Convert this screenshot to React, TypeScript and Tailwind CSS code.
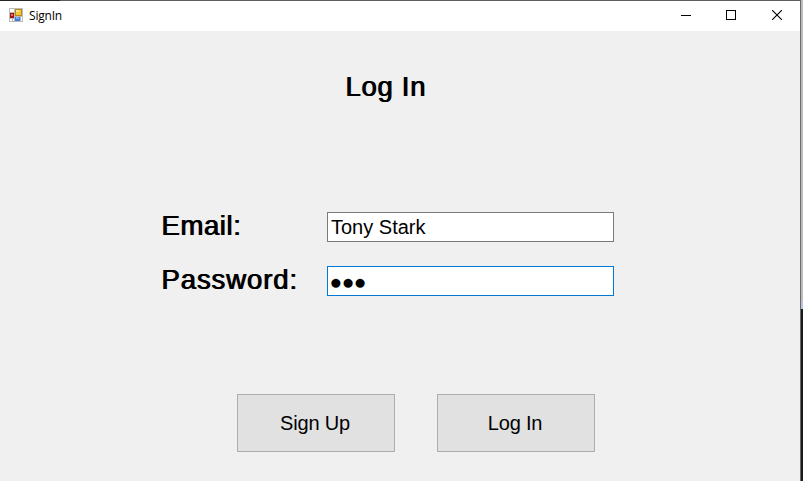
import React from "react";

const labelText =
  "text-[27.5px] leading-[30px] whitespace-nowrap [text-shadow:1px_0_0_#000]";

function FormIcon() {
  return (
    <svg width="14" height="14" viewBox="0 0 14 14" shapeRendering="crispEdges">
      <rect width="14" height="14" fill="#bcbcbc" />
      <rect x="1" y="1" width="4" height="3" fill="#fff" />
      <rect x="6" y="1" width="7" height="7" fill="#b98a10" />
      <rect x="7" y="2" width="5" height="5" fill="#f2c63c" />
      <rect x="7" y="2" width="3" height="2" fill="#fbe38c" />
      <rect x="1" y="5" width="4" height="5" fill="#a31212" />
      <rect x="2" y="6" width="2" height="2" fill="#e8705c" />
      <rect x="1" y="11" width="2" height="2" fill="#fff" />
      <rect x="4" y="11" width="1" height="2" fill="#fff" />
      <rect x="6" y="9" width="5" height="4" fill="#3f7be0" />
      <rect x="7" y="9" width="3" height="2" fill="#84acf2" />
      <rect x="12" y="9" width="1" height="4" fill="#fff" />
    </svg>
  );
}

function TitleBar() {
  return (
    <header className="flex h-[30px] items-center bg-white pl-[9px]">
      <div className="pb-[2px]">
        <FormIcon />
      </div>
      <span className="ml-[6px] font-['Open_Sans',sans-serif] text-[12px] leading-[16px] tracking-[-0.2px]">
        SignIn
      </span>
      <div className="ml-auto flex h-full items-center pr-[18px] pb-[2px]">
        <svg width="10" height="10" className="mr-[35px]" shapeRendering="crispEdges">
          <rect y="5" width="10" height="1" />
        </svg>
        <svg width="10" height="10" className="mr-[36px]" shapeRendering="crispEdges">
          <path fillRule="evenodd" d="M0 0h10v10H0zM1 1v8h8V1z" />
        </svg>
        <svg width="10" height="10">
          <path d="M0 0L10 10M10 0L0 10" stroke="#000" strokeWidth="1.1" />
        </svg>
      </div>
    </header>
  );
}

export default function App() {
  return (
    <div className="flex h-[481px] w-[803px] overflow-hidden font-['Liberation_Sans',Arial,sans-serif] text-black">
      <div className="flex w-[801px] flex-col">
        <div className="flex h-px bg-[#5f5d5e]">
          <div className="w-[60px] bg-[#252225]" />
        </div>
        <div className="flex flex-1 flex-col border-r border-r-[#6a6a6a]">
          <TitleBar />
          <main className="flex flex-1 flex-col bg-[#f0f0f0]">
            <h1 className={`mt-[41px] ml-[345px] font-normal tracking-[0.7px] ${labelText}`}>Log In</h1>
            <div className="mt-[109px] flex h-[32px] items-start pl-[161px]">
              <label className={`w-[166px] tracking-[0.6px] ${labelText}`}>Email:</label>
              <div className="mt-[1px] h-[30px] w-[287px] border border-[#7a7a7a] bg-white pl-[3px] text-[20px] leading-[28px]">
                Tony Stark
              </div>
            </div>
            <div className="mt-[22px] flex h-[32px] items-start pl-[161px]">
              <label className={`w-[166px] tracking-[0.9px] ${labelText}`}>Password:</label>
              <div className="mt-[1px] h-[30px] w-[287px] border border-[#0078d7] bg-white pl-[1.5px] text-[21px] leading-[29px] tracking-[-0.5px]">
                ●●●
              </div>
            </div>
            <div className="mt-[97px] flex gap-[42px] pl-[237px]">
              <button className="h-[58px] w-[158px] border border-[#adadad] bg-[#e1e1e1] pr-[2px] text-[20px] tracking-[-0.2px]">
                Sign Up
              </button>
              <button className="h-[58px] w-[158px] border border-[#adadad] bg-[#e1e1e1] pr-[2px] text-[20px] tracking-[-0.2px]">
                Log In
              </button>
            </div>
          </main>
        </div>
      </div>
      <div className="flex w-[2px] flex-col">
        <div className="h-[301px] bg-[#bdbdbd]" />
        <div className="h-[8px] bg-[#b4c4d4]" />
        <div className="flex-1 bg-[#181a1a]" />
      </div>
    </div>
  );
}
